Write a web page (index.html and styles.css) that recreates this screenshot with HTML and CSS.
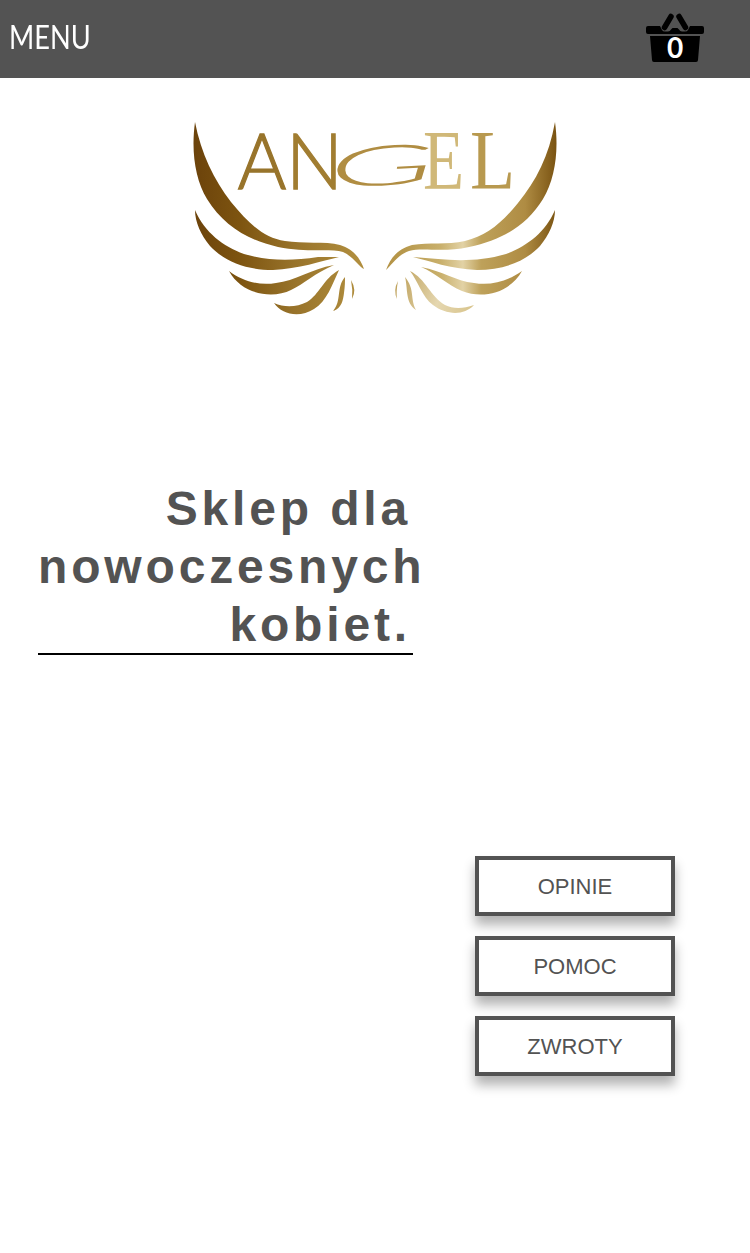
FILE: index.html
```html
<!DOCTYPE html>
<html lang="pl">
<head>
<meta charset="utf-8">
<title>Angel</title>
<link rel="stylesheet" href="styles.css">
</head>
<body>
<header class="topbar">
  <a class="menu">MENU</a>
  <a class="basket">
    <svg class="basket-icon" width="64" height="56" viewBox="643 10 64 56">
      <g class="basket-shape">
        <path d="M648 26h12l2 4q1 1.500 3 1.500h3q2 0 3-2l1.500-1.500h5l1.500 1.500q1 2 3 2h3q2 0 3-1.500l2-4h12q2 0 2 2v4q0 2-2 2h-54q-2 0-2-2v-4q0-2 2-2Z"/>
        <path d="M650 36h50l-2 24q0 2-2 2h-42q-2 0-2-2Z"/>
        <path class="handle" d="M664.500 27.500L671 16.500M685.500 27.500L679 16.500"/>
      </g>
    </svg>
    <span class="count">0</span>
  </a>
</header>
<main>
  <svg class="logo" width="370" height="200" viewBox="190 118 370 200">
    <defs>
      <linearGradient id="gold" gradientUnits="userSpaceOnUse" x1="192" y1="200" x2="558" y2="200">
        <stop offset="0" stop-color="#6b420b"/>
        <stop offset=".13" stop-color="#7d5410"/>
        <stop offset=".28" stop-color="#98732a"/>
        <stop offset=".45" stop-color="#b08d3d"/>
        <stop offset=".58" stop-color="#b7984c"/>
        <stop offset=".68" stop-color="#c9b06c"/>
        <stop offset=".74" stop-color="#e2d2a5"/>
        <stop offset=".79" stop-color="#bea15a"/>
        <stop offset=".91" stop-color="#af8c43"/>
        <stop offset="1" stop-color="#77500f"/>
      </linearGradient>
      <linearGradient id="pale" gradientUnits="userSpaceOnUse" x1="395" y1="270" x2="475" y2="300">
        <stop offset="0" stop-color="#b99a50"/>
        <stop offset=".6" stop-color="#e5d7b0"/>
        <stop offset="1" stop-color="#d9c58e"/>
      </linearGradient>
    </defs>
    <g fill="url(#gold)">
      <path d="M195 122C201 153 214 180 231 202C249 224 264 238 285 241C303 244 325 241 340 245C354 249 361 260 364 269C360 268 354 257 343 252C330 248 307 253 278 247C247 240 223 225 207 199C195 179 191 151 195 122Z"/>
      <path d="M195 210C205 233 223 246 244 254C268 261 291 261 318 257L339 257C322 261 298 269 273 270C247 270 225 262 210 246C201 235 195 222 195 210Z"/>
      <path d="M229 271C242 281 259 286 276 283C295 281 311 269 334 265C315 273 304 284 291 290C273 299 242 295 229 271Z"/>
      <path d="M274 303C285 308 297 307 307 302C320 294 323 279 339 270C332 285 327 301 314 309C300 318 282 315 274 303Z"/>
      <path d="M345 277C336 287 342 301 333 311C342 308 343 300 344 293C345 286 345 281 345 277Z"/>
      <path d="M351 280Q353 290 352 299Q357 290 351 280Z"/>
      <path d="M555 122C549 156 536 181 518 203C501 224 486 236 465 241C447 245 429 242 412 245C397 249 390 259 386 270C391 266 397 255 409 251C423 247 443 253 469 247C503 240 527 225 543 199C555 179 559 151 555 122Z"/>
      <path d="M555 210C545 233 527 246 506 254C482 261 459 261 438 259L413 257C430 261 450 269 477 270C503 270 525 262 540 246C549 235 555 222 555 210Z"/>
      <path d="M522 271C508 281 491 286 474 283C455 281 443 271 421 267C436 273 447 285 462 291C482 299 509 294 522 271Z"/>
    </g>
    <g fill="url(#pale)">
      <path d="M474 305C463 309 453 309 445 305C430 296 426 279 410 271C418 281 422 297 433 305C446 315 464 316 474 305Z"/>
      <path d="M405 277C408 288 405 303 416 310C410 299 415 289 405 277Z"/>
      <path d="M398 281Q393 290 397 299Q396 291 398 281Z"/>
    </g>
    <g>
      <text class="sans tone-a" transform="translate(237.500 188.500) scale(.97 1)">A</text>
      <text class="sans tone-n" transform="translate(286 188.500) scale(.98 1)">N</text>
      <text class="swash" fill="#b08d42" transform="translate(329 188) rotate(-3) scale(2.850 1)">G</text>
      <text class="serif" fill="#d0b878" transform="translate(423 189) scale(.8 1)">E</text>
      <text class="serif" fill="#b8994f" transform="translate(470 189) scale(.88 1)">L</text>
    </g>
  </svg>
  <h1 class="slogan">Sklep dla nowoczesnych kobiet.</h1>
  <nav class="links">
    <a class="link">OPINIE</a>
    <a class="link">POMOC</a>
    <a class="link">ZWROTY</a>
  </nav>
</main>
</body>
</html>
```
FILE: styles.css
```css
* { box-sizing: border-box; }
body {
  margin: 0;
  min-height: 1253px;
  background: #fff;
  color: #535353;
  font-family: "Liberation Sans", Arial, sans-serif;
}
.topbar {
  display: flex;
  justify-content: space-between;
  height: 78px;
  padding: 10px 43px 0 9px;
  background: #535353;
}
.menu {
  color: #fff;
  font: 32px/54px "Lato", sans-serif;
  transform: scaleX(.85);
  transform-origin: left;
}
.basket { position: relative; width: 64px; height: 56px; }
.basket-icon { display: block; }
.basket-shape { filter: blur(.5px); }
.handle { fill: none; stroke: #000; stroke-width: 5.5; stroke-linecap: round; }
.count {
  position: absolute;
  inset: 20px 0 auto;
  color: #fff;
  font: bold 28px/34px "Lato", sans-serif;
  text-align: center;
}
main { display: flex; flex-direction: column; padding: 40px 0 100px; }
.logo { align-self: center; overflow: visible; }
.sans { font: 300 77px "Lato", sans-serif; stroke-width: 1.3; }
.tone-a { fill: #98742b; stroke: #98742b; }
.tone-n { fill: #a17d31; stroke: #a17d31; }
.serif { font: 84px "Liberation Serif", serif; }
.swash { font: italic 300 55px "Lato", sans-serif; }
.slogan {
  width: 375px;
  height: 176px;
  margin: 161px 0 0 38px;
  padding: 1px 2px 0 0;
  border-bottom: 2px solid #000;
  font-size: 48px;
  line-height: 58px;
  letter-spacing: 3.84px;
  text-align: right;
}
.links {
  display: flex;
  flex-direction: column;
  gap: 20px;
  width: 200px;
  margin: 201px 0 0 475px;
}
.link {
  height: 60px;
  border: 4px solid #535353;
  background: #fff;
  box-shadow: 0 9px 11px rgba(0, 0, 0, .3);
  font-size: 22px;
  line-height: 53px;
  text-align: center;
}
```
